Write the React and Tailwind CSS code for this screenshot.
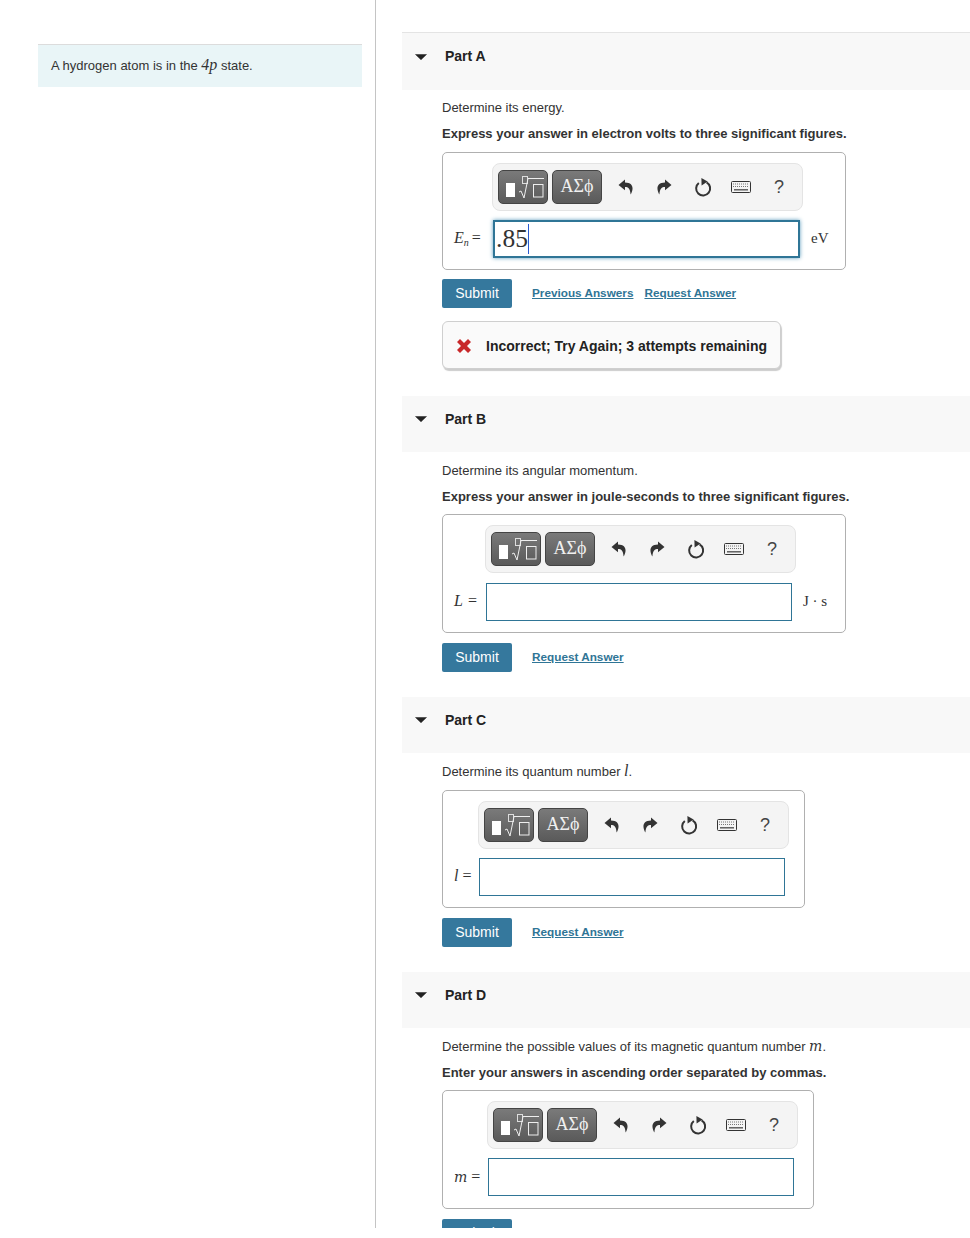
import React from "react";

const serif = "[font-family:'Liberation_Serif',serif]";
const mathM = "[font-family:'DejaVu_Serif',serif] italic text-[14px]";

function Undo({ flip }) {
  return (
    <svg width="16" height="16" viewBox="0 0 16 16" className={flip ? "-scale-x-100" : ""}>
      <path d="M7 0.5 L0.5 6 L7 11.2 L7 8 C10.2 8 12.2 9.6 12.6 15.5 C15.4 11 16.4 3.8 7 3.6 Z" fill="#333" />
    </svg>
  );
}
function Reset() {
  return (
    <svg width="18" height="20" viewBox="0 0 18 20">
      <path d="M4.8 6 A7 7 0 1 0 12.6 5.4" fill="none" stroke="#333" strokeWidth="2" />
      <path d="M7.4 1 L13.6 4.6 L7.6 8.4 Z" fill="#333" />
    </svg>
  );
}
function Keyboard() {
  return (
    <svg width="20" height="12" viewBox="0 0 20 12">
      <rect x="0.5" y="0.5" width="19" height="11" rx="1" fill="#f4f4f4" stroke="#333" />
      <path d="M2 3h16M2 5.5h16" stroke="#777" strokeWidth="1" strokeDasharray="1 1" fill="none" />
      <path d="M3 8.8h14" stroke="#555" strokeWidth="1.4" fill="none" />
    </svg>
  );
}
function Caret() {
  return (
    <svg width="12" height="6" viewBox="0 0 12 6">
      <path d="M0.5 0.5 H11.5 L6 5.8 Z" fill="#222" stroke="#222" strokeWidth="0.5" strokeLinejoin="round" />
    </svg>
  );
}

function Toolbar() {
  const btn = "h-[34px] w-[50px] rounded-[5px] border border-[#444] bg-gradient-to-b from-[#7a7a7a] to-[#5a5a5a] flex items-center justify-center text-[#f0f0f0]";
  return (
    <div className="h-[48px] w-[311px] rounded-[8px] border border-[#e4e4e4] bg-[#f4f4f4] flex items-center pl-[5px]">
      <div className={btn}>
        <svg width="44" height="28" viewBox="0 0 44 28">
          <rect x="5" y="10" width="9" height="14" fill="#fff" />
          <rect x="21.5" y="3.5" width="5" height="7" fill="none" stroke="#ddd" />
          <path d="M18 19 L20 18 L23 25 L27 5.5 H43" fill="none" stroke="#eee" strokeWidth="1" />
          <rect x="32.5" y="11.5" width="9.5" height="12.5" fill="none" stroke="#eee" />
        </svg>
      </div>
      <div className={`${btn} ml-[4px] pb-[2px] text-[18px] ${serif}`}>ΑΣϕ</div>
      <div className="ml-[16px] w-[16px] flex justify-center"><Undo /></div>
      <div className="ml-[22px] w-[16px] flex justify-center"><Undo flip /></div>
      <div className="ml-[22px] w-[18px] flex justify-center"><Reset /></div>
      <div className="ml-[19px] w-[20px] flex justify-center"><Keyboard /></div>
      <div className="ml-[23px] text-[18px] text-[#444] font-normal">?</div>
    </div>
  );
}

function Answer({ box, labelW, label, unit, unitGap, value, gap }) {
  return (
    <div className={`rounded-[5px] border border-[#b0b0b0] flex pt-[10px] pl-[11px] ${box}`}>
      <div className={`shrink-0 flex flex-col justify-end pb-[21px] ${labelW}`}>
        <div className={`text-[16px] leading-[20px] text-[#333] whitespace-nowrap ${serif}`}>{label}</div>
      </div>
      <div className={`w-[311px] shrink-0 flex flex-col ${gap}`}>
        <Toolbar />
        {value ? (
          <div className={`ml-[1px] h-[38px] w-[307px] border-2 border-[#2f7596] shadow-[0_0_4px_#5b9cbd] bg-white flex items-center pl-[1px] text-[25.5px] text-[#333] ${serif}`}>
            {value}
            <span className="w-px h-[30px] bg-[#2a5bd0]" />
          </div>
        ) : (
          <div className="ml-[1px] h-[38px] w-[306px] border border-[#2f7596] bg-white" />
        )}
      </div>
      {unit && <div className={`self-end mb-[21px] text-[15px] leading-[20px] text-[#333] whitespace-nowrap ${unitGap} ${serif}`}>{unit}</div>}
    </div>
  );
}

function Actions({ previous, top }) {
  const link = "text-[11.75px] font-bold text-[#2f7596] underline";
  return (
    <div className={`flex items-start ${top}`}>
      <div className="h-[29px] w-[70px] rounded-[2px] bg-[#35789d] text-white text-[14px] flex items-center justify-center">Submit</div>
      <div className="ml-[20px] flex gap-[11px] leading-[27px]">
        {previous && <span className={link}>Previous Answers</span>}
        <span className={link}>Request Answer</span>
      </div>
    </div>
  );
}

function Header({ name, height }) {
  return (
    <div className={`flex items-center bg-[#f8f8f8] ${height}`}>
      <div className="ml-[13px] mb-[10px] flex"><Caret /></div>
      <div className="ml-[18px] mb-[10px] text-[14px] font-bold text-[#222]">{name}</div>
    </div>
  );
}

function MathI({ children }) {
  return <span className={`italic text-[16px] ${serif}`}>{children}</span>;
}

export default function App() {
  return (
    <div className="h-[1228px] overflow-hidden flex bg-white text-[13px] text-[#333] font-['Liberation_Sans',sans-serif]">
      <div className="w-[376px] shrink-0 border-r border-[#c4c4c4] pl-[38px] pt-[44px]">
        <div className="w-[324px] h-[43px] border-t border-[#dcdcdc] bg-[#e9f5f7] pl-[13px] pb-[2px] flex items-center">
          <span>A hydrogen atom is in the <MathI>4p</MathI> state.</span>
        </div>
      </div>

      <div className="flex-1 pl-[26px] pt-[32px]">
        <div className="border-t border-[#e4e4e4]"><Header name="Part A" height="h-[57px]" /></div>
        <div className="pl-[40px]">
          <p className="mt-[10px] leading-[16px]">Determine its energy.</p>
          <p className="mt-[10px] leading-[16px] font-bold">Express your answer in electron volts to three significant figures.</p>
          <div className="mt-[10px]">
            <Answer box="w-[404px] h-[118px]" labelW="w-[38px]" gap="gap-[9px]" label={<span><i>E<sub className="text-[10px]">n</sub></i><span className="ml-[3px]">=</span></span>} unit="eV" unitGap="ml-[8px]" value=".85" />
          </div>
          <Actions previous top="mt-[9px]" />
          <div className="mt-[13px] w-[339px] h-[48px] pt-[2px] rounded-[6px] border border-[#cfcfcf] bg-[#fafafa] shadow-[1px_2px_1px_#ccc] flex items-center pl-[13px]">
            <svg width="16" height="16" viewBox="0 0 16 16"><path d="M1 4 L4 1 L8 5 L12 1 L15 4 L11 8 L15 12 L12 15 L8 11 L4 15 L1 12 L5 8 Z" fill="#c8282a" /></svg>
            <span className="ml-[14px] text-[14px] font-bold text-[#222]">Incorrect; Try Again; 3 attempts remaining</span>
          </div>
        </div>

        <div className="mt-[27px]"><Header name="Part B" height="h-[56px]" /></div>
        <div className="pl-[40px]">
          <p className="mt-[11px] leading-[16px]">Determine its angular momentum.</p>
          <p className="mt-[10px] leading-[16px] font-bold">Express your answer in joule-seconds to three significant figures.</p>
          <div className="mt-[9px]">
            <Answer box="w-[404px] h-[119px]" labelW="w-[31px]" gap="gap-[10px]" label={<span><i>L</i><span className="ml-[5px]">=</span></span>} unit="J · s" unitGap="ml-[7px]" />
          </div>
          <Actions top="mt-[10px]" />
        </div>

        <div className="mt-[25px]"><Header name="Part C" height="h-[56px]" /></div>
        <div className="pl-[40px]">
          <p className="mt-[10px] leading-[16px]">Determine its quantum number <MathI>l</MathI>.</p>
          <div className="mt-[10px]">
            <Answer box="w-[363px] h-[118px]" labelW="w-[24px]" gap="gap-[9px]" label={<span><i>l</i> =</span>} />
          </div>
          <Actions top="mt-[10px]" />
        </div>

        <div className="mt-[25px]"><Header name="Part D" height="h-[56px]" /></div>
        <div className="pl-[40px]">
          <p className="mt-[10px] leading-[16px]">Determine the possible values of its magnetic quantum number <span className={mathM}>m</span>.</p>
          <p className="mt-[10px] leading-[16px] font-bold">Enter your answers in ascending order separated by commas.</p>
          <div className="mt-[9px]">
            <Answer box="w-[372px] h-[119px]" labelW="w-[33px]" gap="gap-[9px]" label={<span><span className={mathM}>m</span> =</span>} />
          </div>
          <Actions top="mt-[10px]" />
        </div>
      </div>
    </div>
  );
}
